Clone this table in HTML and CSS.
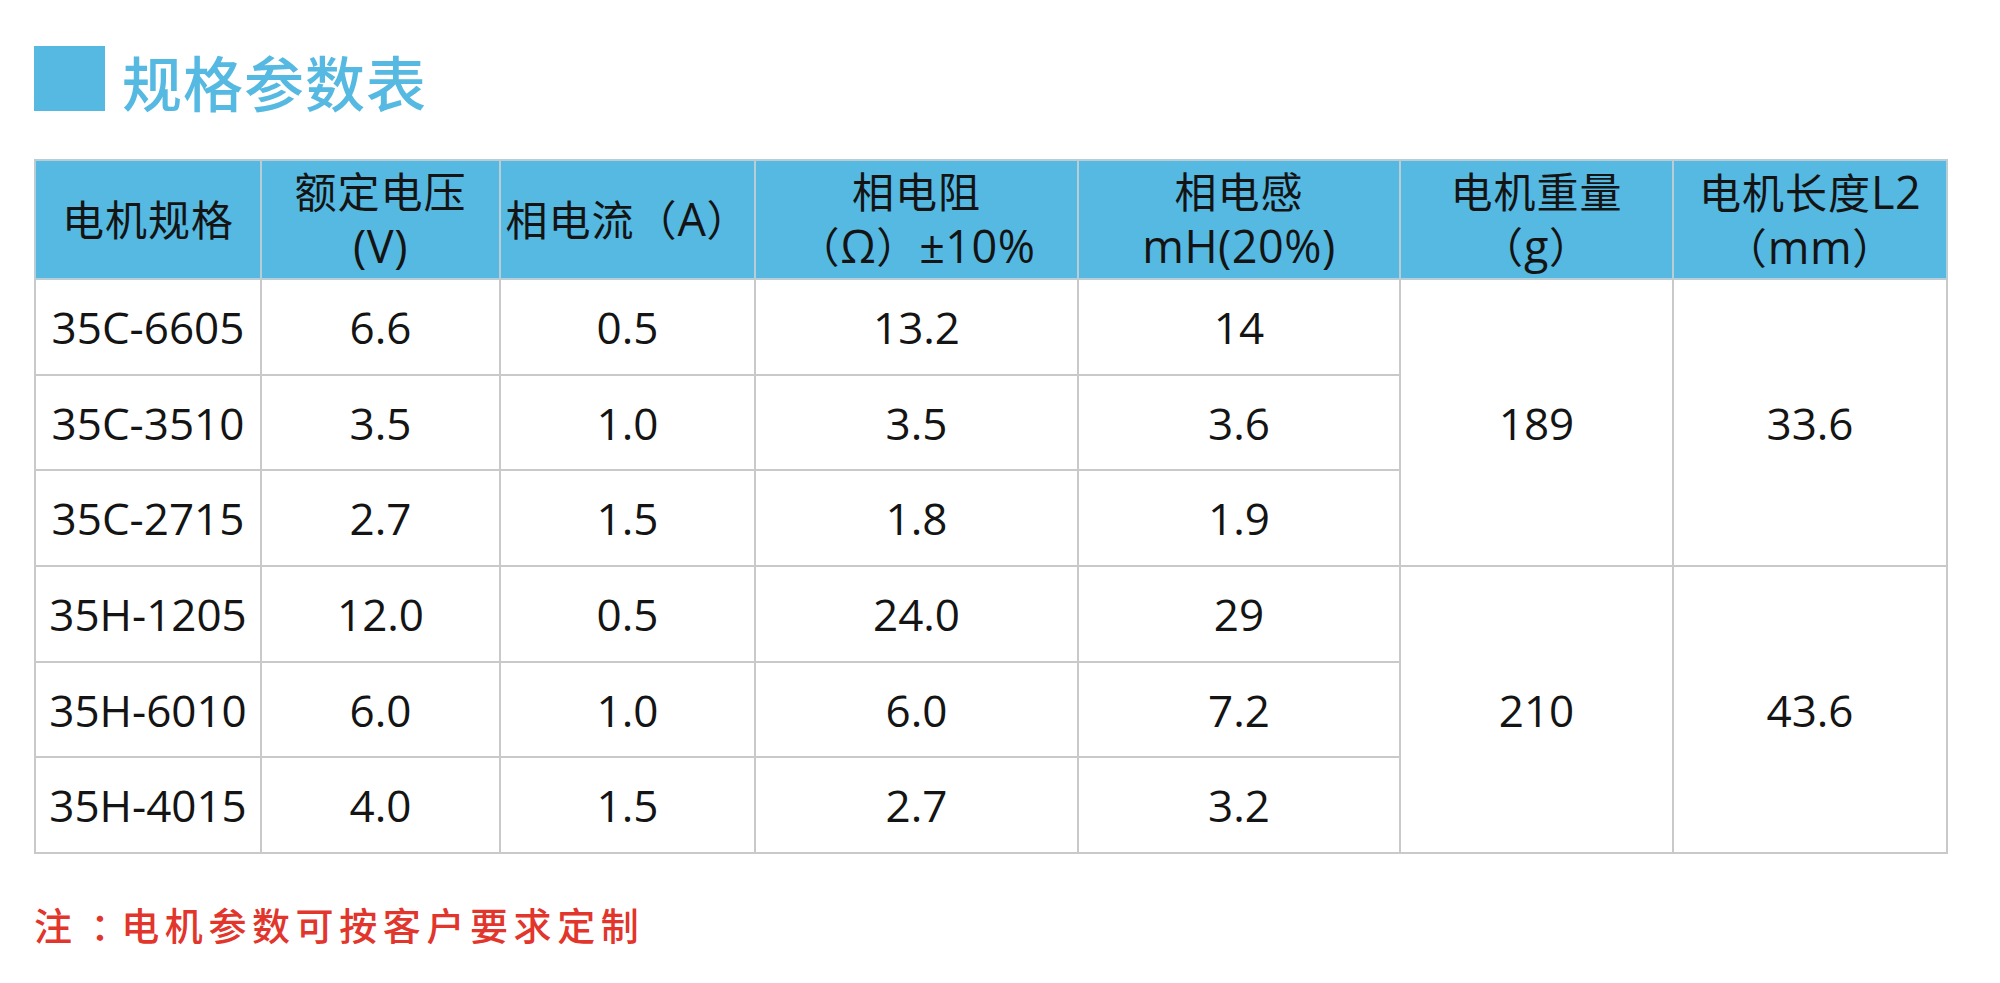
FILE: index.html
```html
<!DOCTYPE html>
<html lang="zh-CN">
<head>
<meta charset="utf-8">
<title>规格参数表</title>
<link rel="stylesheet" href="styles.css">
</head>
<body>
<div class="page">
  <div class="title-row">
    <span class="title-mark"></span>
    <h1 class="title">规格参数表</h1>
  </div>
  <table class="spec">
    <colgroup>
      <col class="c1"><col class="c2"><col class="c3"><col class="c4"><col class="c5"><col class="c6"><col class="c7">
    </colgroup>
    <thead>
      <tr>
        <th>电机规格</th>
        <th>额定电压<br><span class="lat">(V)</span></th>
        <th>相电流（<span class="lat">A</span>）</th>
        <th>相电阻<br>（<span class="lat">Ω</span>）<span class="lat">±10%</span></th>
        <th>相电感<br><span class="lat">mH(20%)</span></th>
        <th>电机重量<br>（<span class="lat">g</span>）</th>
        <th>电机长度<span class="lat">L2</span><br>（<span class="lat">mm</span>）</th>
      </tr>
    </thead>
    <tbody>
      <tr><td>35C-6605</td><td>6.6</td><td>0.5</td><td>13.2</td><td>14</td><td rowspan="3">189</td><td rowspan="3">33.6</td></tr>
      <tr><td>35C-3510</td><td>3.5</td><td>1.0</td><td>3.5</td><td>3.6</td></tr>
      <tr><td>35C-2715</td><td>2.7</td><td>1.5</td><td>1.8</td><td>1.9</td></tr>
      <tr><td>35H-1205</td><td>12.0</td><td>0.5</td><td>24.0</td><td>29</td><td rowspan="3">210</td><td rowspan="3">43.6</td></tr>
      <tr><td>35H-6010</td><td>6.0</td><td>1.0</td><td>6.0</td><td>7.2</td></tr>
      <tr><td>35H-4015</td><td>4.0</td><td>1.5</td><td>2.7</td><td>3.2</td></tr>
    </tbody>
  </table>
  <p class="note">注<span class="colon">：</span>电机参数可按客户要求定制</p>
</div>
</body>
</html>
```

FILE: styles.css
```css
html, body {
  margin: 0;
  padding: 0;
  background: #ffffff;
}

.page {
  padding: 46px 0 0 34px;
  font-family: "Open Sans", "Noto Sans CJK SC", sans-serif;
  color: #141414;
}

.title-row {
  display: flex;
  align-items: center;
  gap: 17px;
  height: 65px;
}

.title-mark {
  display: block;
  width: 71px;
  height: 65px;
  background: #55b9e2;
}

.title {
  margin: 0;
  font-family: "Noto Sans CJK SC", sans-serif;
  font-weight: 500;
  font-size: 60px;
  line-height: 65px;
  color: #55b9e2;
  letter-spacing: 1px;
  position: relative;
  top: 2px;
}

.spec {
  margin-top: 48px;
  width: 1912px;
  border-collapse: collapse;
  table-layout: fixed;
}

.c1 { width: 226px; }
.c2 { width: 239px; }
.c3 { width: 255px; }
.c4 { width: 323px; }
.c5 { width: 322px; }
.c6 { width: 273px; }
.c7 { width: 274px; }

.spec th,
.spec td {
  border: 2px solid #c9c9c9;
  text-align: center;
  vertical-align: middle;
  padding: 0;
  white-space: nowrap;
}

.spec th {
  height: 117px;
  background: #55b9e2;
  border-color: #b9cdd6;
  font-weight: 400;
  font-size: 42px;
  line-height: 54px;
  letter-spacing: 1px;
  color: #141414;
}

.spec th .lat {
  font-size: 45px;
  letter-spacing: 0.5px;
}

.spec td {
  height: 93.7px;
  font-size: 44px;
  line-height: 50px;
  color: #141414;
}

.note {
  margin: 50px 0 0 0;
  font-family: "Noto Sans CJK SC", sans-serif;
  font-weight: 500;
  font-size: 38px;
  line-height: 40px;
  letter-spacing: 5.6px;
  color: #e2352c;
}

.note .colon {
  padding-left: 13px;
  letter-spacing: -7.4px;
}
```
